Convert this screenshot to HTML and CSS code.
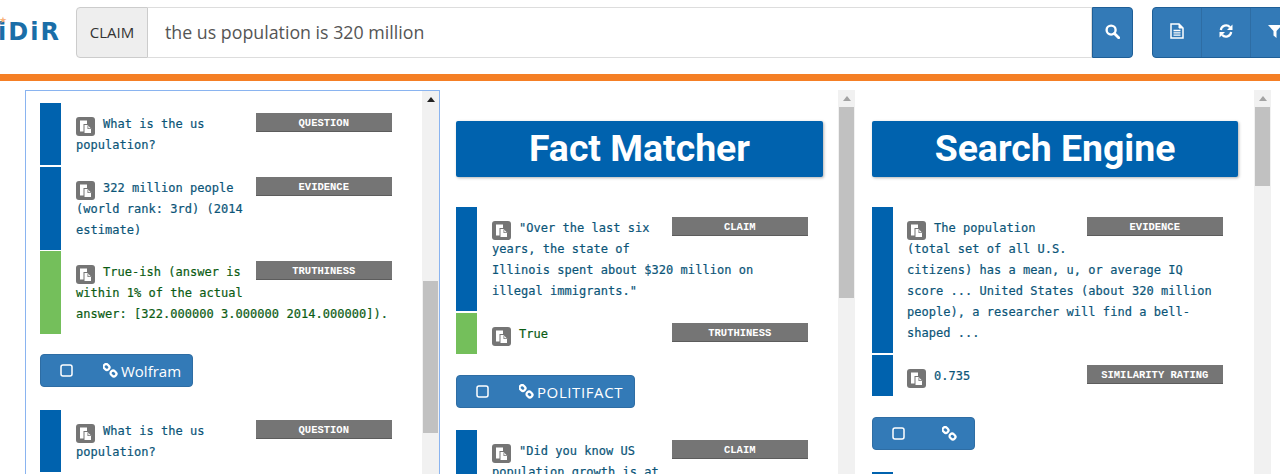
FILE: index.html
```html
<!DOCTYPE html>
<html lang="en">
<head>
    <meta charset="UTF-8">
    <meta name="viewport" content="width=device-width, initial-scale=1.0">
    <title>iDiR Claim Check</title>
    <link rel="stylesheet" href="styles.css">
</head>
<body>
    <svg class="icon-defs" xmlns="http://www.w3.org/2000/svg" width="0" height="0">
        <symbol id="copy" viewBox="0 0 19 19">
            <path fill="#fff" d="M4 3.500h7v3.500H7.500v7.500H4z"></path>
            <path fill="#fff" d="M8.500 8h3l3.500 3.500V16H8.500z"></path>
            <path fill="#757575" d="M11.500 8.500v3.500H15v-0.800h-2.700V8.500z"></path>
        </symbol>
        <symbol id="square" viewBox="0 0 13 13">
            <rect x="1" y="1" width="11" height="11" rx="2" fill="none" stroke="#fff" stroke-width="1.500"></rect>
        </symbol>
        <symbol id="chain" viewBox="0 0 15 15">
            <g fill="none" stroke="#fff" stroke-width="2.300">
                <rect x="0.500" y="-2.500" width="6" height="5" rx="2.300" transform="translate(3.500 4) rotate(45) translate(-3.500 0)"></rect>
                <rect x="0.500" y="-2.500" width="6" height="5" rx="2.300" transform="translate(10.500 10.500) rotate(45) translate(-3.500 0)"></rect>
            </g>
        </symbol>
    </svg>

    <header class="topbar">
        <div class="logo"><span class="logo-star">★</span>iDiR</div>
        <form class="search">
            <span class="search-addon">CLAIM</span>
            <div class="search-input">the us population is 320 million</div>
            <button class="search-btn" type="button">
                <svg width="15" height="15" viewBox="0 0 14 14"><circle cx="5.700" cy="5.700" r="4.200" fill="none" stroke="#fff" stroke-width="2.200"></circle><path d="M8.800 8.800l4 4" stroke="#fff" stroke-width="2.600" stroke-linecap="round"></path></svg>
            </button>
        </form>
        <div class="tools">
            <button class="tool" type="button">
                <svg width="14" height="16" viewBox="0 0 14 16"><path d="M1 1h8l4 4v10H1z" fill="none" stroke="#fff" stroke-width="1.500"></path><path d="M9 1v4h4" fill="#fff" stroke="#fff"></path><path d="M3.500 7.500h7M3.500 9.800h7M3.500 12.100h7" stroke="#fff" stroke-width="1.300"></path></svg>
            </button>
            <button class="tool" type="button">
                <svg width="14" height="14" viewBox="0 0 14 14"><path d="M1.800 6A5.300 5.300 0 0 1 11 3.200" fill="none" stroke="#fff" stroke-width="2.200"></path><path d="M13.500 0.500V6H8z" fill="#fff"></path><path d="M12.200 8A5.300 5.300 0 0 1 3 10.800" fill="none" stroke="#fff" stroke-width="2.200"></path><path d="M0.500 13.500V8H6z" fill="#fff"></path></svg>
            </button>
            <button class="tool" type="button">
                <svg width="14" height="14" viewBox="0 0 14 14"><path d="M0 1h14L8.500 7v7l-3-2.500V7z" fill="#fff"></path></svg>
            </button>
        </div>
    </header>

    <main class="columns">
        <section class="col col-active">
            <div class="col-body">
                <div class="card">
                    <div class="row">
                        <span class="tag">QUESTION</span>
                        <svg class="copy"><use href="#copy"></use></svg>What is the us population?
                    </div>
                    <div class="row">
                        <span class="tag">EVIDENCE</span>
                        <svg class="copy"><use href="#copy"></use></svg>322 million people (world rank: 3rd) (2014 estimate)
                    </div>
                    <div class="row row-true">
                        <span class="tag">TRUTHINESS</span>
                        <svg class="copy"><use href="#copy"></use></svg>True-ish (answer is within 1% of the actual answer: [322.000000 3.000000 2014.000000]).
                    </div>
                </div>
                <a class="src-btn">
                    <svg class="src-check"><use href="#square"></use></svg>
                    <svg class="src-chain"><use href="#chain"></use></svg>Wolfram
                </a>
                <div class="card">
                    <div class="row">
                        <span class="tag">QUESTION</span>
                        <svg class="copy"><use href="#copy"></use></svg>What is the us population?
                    </div>
                    <div class="row">
                        <span class="tag">EVIDENCE</span>
                        <svg class="copy"><use href="#copy"></use></svg>322 million people (world rank: 3rd) (2014 estimate)
                    </div>
                </div>
            </div>
            <div class="scroll">
                <span class="scroll-up"></span>
                <span class="scroll-thumb thumb-a"></span>
            </div>
        </section>

        <section class="col">
            <div class="col-body col-top">
                <h2 class="col-title">Fact Matcher</h2>
                <div class="card">
                    <div class="row">
                        <span class="tag">CLAIM</span>
                        <svg class="copy"><use href="#copy"></use></svg>"Over the last six years, the state of Illinois spent about $320 million on illegal immigrants."
                    </div>
                    <div class="row row-true">
                        <span class="tag">TRUTHINESS</span>
                        <svg class="copy"><use href="#copy"></use></svg>True
                    </div>
                </div>
                <a class="src-btn src-btn-caps">
                    <svg class="src-check"><use href="#square"></use></svg>
                    <svg class="src-chain"><use href="#chain"></use></svg>POLITIFACT
                </a>
                <div class="card">
                    <div class="row">
                        <span class="tag">CLAIM</span>
                        <svg class="copy"><use href="#copy"></use></svg>"Did you know US population growth is at
                    </div>
                </div>
            </div>
            <div class="scroll">
                <span class="scroll-up"></span>
                <span class="scroll-thumb thumb-b"></span>
            </div>
        </section>

        <section class="col">
            <div class="col-body col-top col-last">
                <h2 class="col-title">Search Engine</h2>
                <div class="card">
                    <div class="row">
                        <span class="tag">EVIDENCE</span>
                        <svg class="copy"><use href="#copy"></use></svg>The population (total set of all U.S. citizens) has a mean, u, or average IQ score ... United States (about 320 million people), a researcher will find a bell-shaped ...
                    </div>
                    <div class="row">
                        <span class="tag">SIMILARITY RATING</span>
                        <svg class="copy"><use href="#copy"></use></svg>0.735
                    </div>
                </div>
                <a class="src-btn src-btn-empty">
                    <svg class="src-check"><use href="#square"></use></svg>
                    <svg class="src-chain"><use href="#chain"></use></svg>
                </a>
                <div class="card">
                    <div class="row">&nbsp;</div>
                </div>
            </div>
            <div class="scroll">
                <span class="scroll-up"></span>
                <span class="scroll-thumb thumb-c"></span>
            </div>
        </section>
    </main>
</body>
</html>
```

FILE: styles.css
```css
html, body {
    margin: 0;
    height: 100%;
    overflow: hidden;
    background-color: #fff;
}
body {
    font-family: "Open Sans", "Liberation Sans", sans-serif;
    color: #333;
}
.icon-defs {
    position: absolute;
}

/* top bar */
.topbar {
    display: flex;
    align-items: flex-start;
    box-sizing: border-box;
    height: 81px;
    padding-top: 7px;
    border-bottom: 7px solid #f57f25;
}
.logo {
    position: relative;
    flex: none;
    box-sizing: border-box;
    width: 76px;
    padding-top: 12px;
    margin-left: -2px;
    margin-right: 2px;
    font-family: "DejaVu Sans", sans-serif;
    font-size: 24px;
    line-height: 27px;
    font-weight: 700;
    letter-spacing: 2px;
    color: #1a6ea8;
}
.logo-star {
    position: absolute;
    left: 1px;
    top: 7px;
    font-size: 9px;
    line-height: 12px;
    color: #f9b27c;
}
.search {
    display: flex;
    flex: none;
    width: 1057px;
    height: 51px;
    margin: 0;
}
.search-addon {
    flex: none;
    box-sizing: border-box;
    width: 72px;
    line-height: 49px;
    text-align: center;
    font-size: 15px;
    color: #333;
    background-color: #eee;
    border: 1px solid #ccc;
    border-radius: 4px 0 0 4px;
}
.search-input {
    flex: 1;
    padding-left: 17px;
    font-size: 17.800px;
    line-height: 49px;
    color: #555;
    border: 1px solid #ddd;
    border-left: none;
}
.search-btn {
    flex: none;
    width: 41px;
    padding: 0;
    background-color: #337ab7;
    border: 1px solid #1f5f97;
    border-radius: 0 4px 4px 0;
}
.tools {
    display: flex;
    flex: none;
    box-sizing: border-box;
    margin-left: 19px;
    height: 51px;
    border: 1px solid #1f5f97;
    border-radius: 4px;
    background-color: #337ab7;
}
.tool {
    width: 49px;
    padding: 0;
    background: none;
    border: none;
    border-right: 1px solid #2e6da4;
}

/* columns */
.columns {
    display: grid;
    grid-template-columns: 415px 415px 416px;
    padding: 9px 0 0 25px;
}
.col {
    display: flex;
    height: 384px;
    box-sizing: border-box;
    overflow: hidden;
}
.col-active {
    border: 1px solid #8ab4f0;
    border-bottom: none;
}
.col-body {
    flex: 1;
    min-width: 0;
    padding: 12px 15px 0 14px;
    overflow: hidden;
}
.col-top {
    padding: 31px 15px 0 16px;
}
.col-last {
    padding: 31px 16px 0 17px;
}
.col-last .row {
    padding-left: 14px;
}
.col-title {
    margin: 0 0 30px;
    height: 56px;
    line-height: 55px;
    text-align: center;
    font-family: "Roboto", sans-serif;
    font-size: 37.400px;
    font-weight: 700;
    color: #fff;
    background-color: #0062ae;
    border-radius: 2px;
    box-shadow: 1px 1px 3px rgba(0, 0, 0, 0.3);
}

/* fake scrollbar */
.scroll {
    flex: none;
    display: flex;
    flex-direction: column;
    align-items: center;
    width: 17px;
    background-color: #f1f1f1;
}
.scroll-up {
    width: 0;
    height: 0;
    margin-top: 6px;
    border: 4px solid transparent;
    border-top: none;
    border-bottom: 5px solid #a3a3a3;
}
.col-active .scroll-up {
    border-bottom-color: #222;
}
.scroll-thumb {
    width: 15px;
    background-color: #c1c1c1;
}
.thumb-a {
    height: 152px;
    margin-top: 179px;
}
.thumb-b {
    height: 191px;
    margin-top: 6px;
}
.thumb-c {
    height: 79px;
    margin-top: 6px;
}

/* cards */
.row {
    margin-bottom: 1.500px;
    padding: 11px 15.500px 9px 15px;
    font-family: "DejaVu Sans Mono", "Liberation Mono", monospace;
    font-size: 12px;
    line-height: 21px;
    letter-spacing: 0.03px;
    color: #0b5578;
    -webkit-text-stroke: 0.2px currentColor;
    border-left: 21px solid #0062ae;
}
.row-true {
    color: #0c5c14;
    border-left-color: #74bf5b;
}
.tag {
    float: right;
    box-sizing: border-box;
    width: 135.500px;
    height: 19px;
    margin: -1px 0 10px 10px;
    font-family: "Liberation Mono", monospace;
    font-size: 10.500px;
    line-height: 20px;
    font-weight: 700;
    letter-spacing: 0;
    text-align: center;
    color: #fff;
    -webkit-text-stroke: 0;
    background-color: #757575;
    border-bottom: 1px solid #5c5c5c;
}
.copy {
    width: 19px;
    height: 19px;
    margin: -4px 8px -4px 0;
    vertical-align: -4px;
    background-color: #757575;
    border-radius: 3px;
}

/* source buttons */
.src-btn {
    display: inline-flex;
    align-items: center;
    box-sizing: border-box;
    height: 33px;
    margin: 20px 0 22px;
    padding: 0 11px 0 20px;
    font-size: 15px;
    color: #fff;
    background-color: #337ab7;
    border: 1px solid #2e6da4;
    border-radius: 4px;
    vertical-align: top;
}
.col-active .src-btn {
    margin: 18.500px 0 23px;
}
.src-btn-caps {
    letter-spacing: 0.6px;
}
.src-btn-empty {
    padding-right: 17px;
}
.src-check {
    width: 13px;
    height: 13px;
    margin-left: -1px;
    margin-right: 30px;
}
.src-chain {
    width: 15px;
    height: 15px;
    margin-right: 3px;
}
.src-btn-empty .src-chain {
    margin-left: 7px;
    margin-right: 0;
}
```
